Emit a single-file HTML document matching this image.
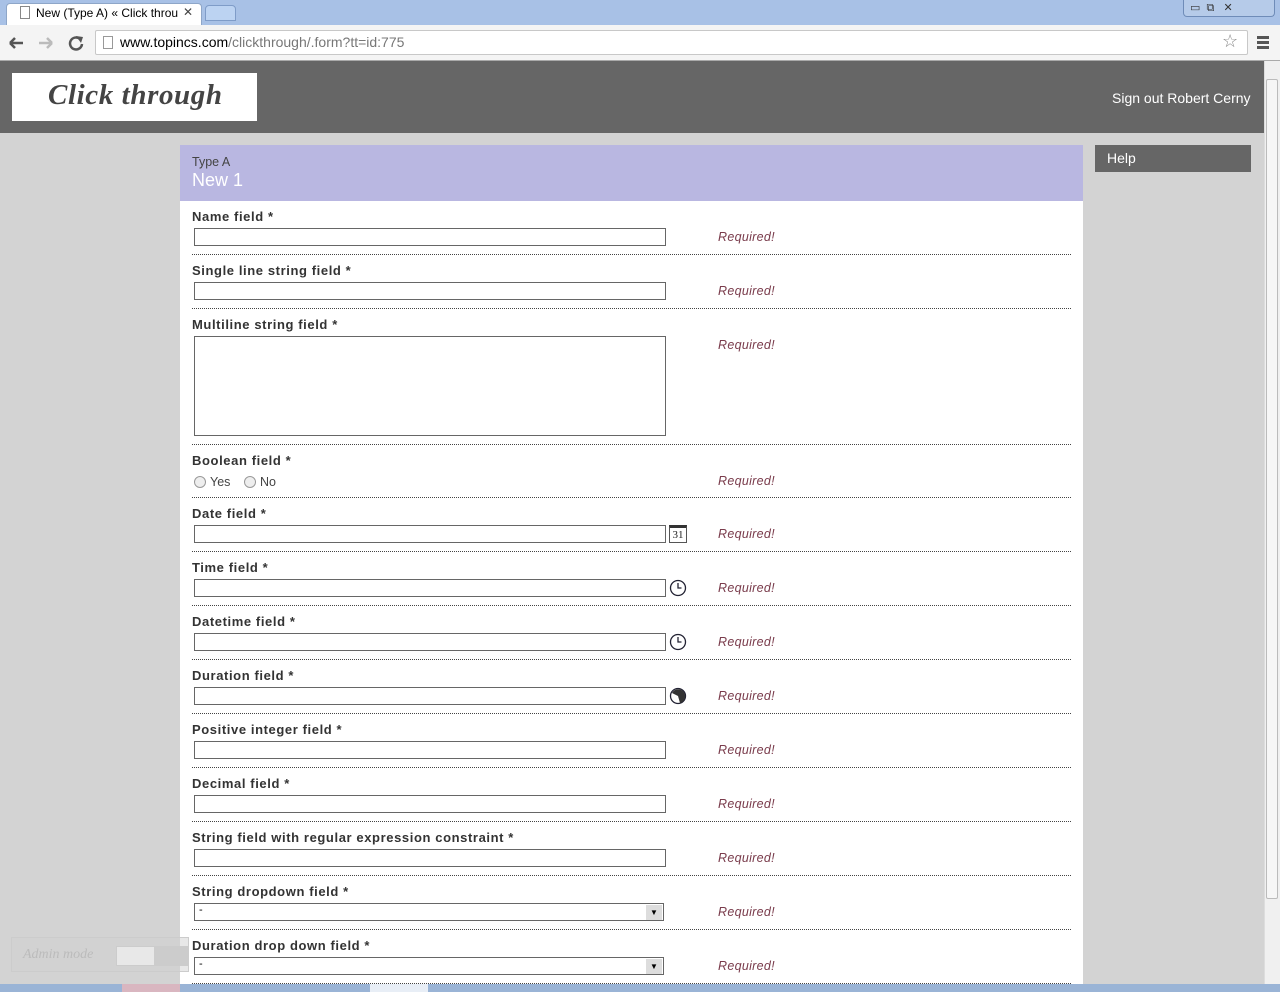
<!DOCTYPE html>
<html><head><meta charset="utf-8"><style>
*{margin:0;padding:0;box-sizing:border-box}
body{width:1280px;height:992px;overflow:hidden;position:relative;background:#d3d3d3;font-family:"Liberation Sans",sans-serif}
.a{position:absolute}
.lbl{position:absolute;left:192px;font-size:13px;font-weight:bold;color:#333;letter-spacing:0.6px}
.inp{position:absolute;left:194px;width:472px;height:18px;border:1px solid #666;background:#fff}
.req{position:absolute;left:718px;font-size:12.5px;font-style:italic;color:#7a3c4c;letter-spacing:0.3px}
.sep{position:absolute;left:192px;width:879px;border-top:1px dotted #444}
</style></head><body>
<!-- tab bar -->
<div class="a" style="left:0;top:0;width:1280px;height:25px;background:#a8c1e6"></div>
<div class="a" style="left:6px;top:3px;width:196px;height:24px;background:#fff;border:1px solid #8ea6c8;border-bottom:none;border-radius:4px 4px 0 0"></div>
<div class="a" style="left:20px;top:6px;width:10px;height:13px;border:1px solid #888;background:#fff"></div>
<div class="a" style="left:36px;top:6px;font-size:12px;color:#000">New (Type A) « Click throu</div>
<div class="a" style="left:180px;top:5px;font-size:12px;color:#444;background:#fff;padding-left:3px">✕</div>
<div class="a" style="left:205px;top:5px;width:31px;height:16px;background:#bcd3f2;border:1px solid #7f9cc8;border-radius:4px 4px 0 0"></div>
<div class="a" style="left:1183px;top:0;width:92px;height:17px;background:#b6cbe9;border:1px solid #6f8cb8;border-top:none;border-radius:0 0 4px 4px"></div>
<div class="a" style="left:1190px;top:1px;font-size:11px;color:#333">▭ &nbsp;⧉ &nbsp;&nbsp;✕</div>
<!-- toolbar -->
<div class="a" style="left:0;top:25px;width:1280px;height:36px;background:#f4f4f4;border-bottom:1px solid #aaa"></div>
<svg class="a" style="left:8px;top:34px" width="80" height="18"><path d="M2 9H15M2 9L7 4M2 9L7 14" stroke="#555" stroke-width="2.5" fill="none"/><path d="M31 9H44M44 9L39 4M44 9L39 14" stroke="#bbb" stroke-width="2.5" fill="none"/><path d="M72 5A6 6 0 1 0 74 10" stroke="#555" stroke-width="2.5" fill="none"/><path d="M68 2L75 3L73 9Z" fill="#555"/></svg>
<div class="a" style="left:95px;top:30px;width:1153px;height:25px;background:#fff;border:1px solid #c8c8c8;border-radius:2px"></div>
<div class="a" style="left:103px;top:36px;width:10px;height:13px;border:1px solid #999"></div>
<div class="a" style="left:120px;top:34px;font-size:14px;color:#000">www.topincs.com<span style="color:#777">/clickthrough/.form?tt=id:775</span></div>
<div class="a" style="left:1222px;top:31px;font-size:18px;color:#888">☆</div>
<div class="a" style="left:1257px;top:36px;width:12px;height:3px;background:#555;box-shadow:0 5px 0 #555,0 10px 0 #555"></div>
<!-- scrollbar -->
<div class="a" style="left:1264px;top:61px;width:16px;height:923px;background:#f0f0f0;border-left:1px solid #ddd"></div>
<div class="a" style="left:1266px;top:79px;width:12px;height:820px;background:#f6f6f6;border:1px solid #bbb;border-radius:2px"></div>
<!-- header -->
<div class="a" style="left:0;top:61px;width:1264px;height:72px;background:#666"></div>
<div class="a" style="left:12px;top:73px;width:245px;height:48px;background:#fff"></div>
<div class="a" style="left:48px;top:79px;font-family:'Liberation Serif',serif;font-size:29px;font-style:italic;font-weight:bold;color:#444;letter-spacing:0.6px">Click through</div>
<div class="a" style="left:1112px;top:90px;font-size:14px;color:#fff">Sign out Robert Cerny</div>
<div class="a" style="left:1095px;top:145px;width:156px;height:27px;background:#666"></div>
<div class="a" style="left:1107px;top:150px;font-size:14px;color:#fff">Help</div>
<!-- content panel -->
<div class="a" style="left:180px;top:145px;width:903px;height:847px;background:#fff"></div>
<div class="a" style="left:180px;top:145px;width:903px;height:56px;background:#b9b7e1"></div>
<div class="a" style="left:192px;top:155px;font-size:12.5px;color:#444">Type A</div>
<div class="a" style="left:192px;top:170px;font-size:18px;color:#fff">New 1</div>

<div class="lbl" style="top:209px">Name field *</div><div class="inp" style="top:228px"></div><div class="req" style="top:230px">Required!</div><div class="sep" style="top:254px"></div>
<div class="lbl" style="top:263px">Single line string field *</div><div class="inp" style="top:282px"></div><div class="req" style="top:284px">Required!</div><div class="sep" style="top:308px"></div>
<div class="lbl" style="top:317px">Multiline string field *</div><div class="inp" style="top:336px;height:100px"></div><div class="req" style="top:338px">Required!</div><div class="sep" style="top:444px"></div>
<div class="lbl" style="top:453px">Boolean field *</div>
<div class="a" style="left:194px;top:476px;width:12px;height:12px;border:1px solid #999;border-radius:50%;background:#eee"></div>
<div class="a" style="left:210px;top:475px;font-size:12.5px;color:#444">Yes</div>
<div class="a" style="left:244px;top:476px;width:12px;height:12px;border:1px solid #999;border-radius:50%;background:#eee"></div>
<div class="a" style="left:260px;top:475px;font-size:12.5px;color:#444">No</div>
<div class="req" style="top:474px">Required!</div><div class="sep" style="top:497px"></div>
<div class="lbl" style="top:506px">Date field *</div><div class="inp" style="top:525px"></div><div class="req" style="top:527px">Required!</div><div class="sep" style="top:551px"></div>
<div class="a" style="left:669px;top:525px;width:18px;height:18px;border:1px solid #555;border-top:3px solid #333;font-family:'Liberation Serif',serif;font-size:11px;text-align:center;line-height:14px;color:#222">31</div>
<div class="lbl" style="top:560px">Time field *</div><div class="inp" style="top:579px"></div><div class="req" style="top:581px">Required!</div><div class="sep" style="top:605px"></div>
<div class="lbl" style="top:614px">Datetime field *</div><div class="inp" style="top:633px"></div><div class="req" style="top:635px">Required!</div><div class="sep" style="top:659px"></div>
<svg class="a" style="left:669px;top:579px" width="18" height="18"><circle cx="9" cy="9" r="7.5" fill="none" stroke="#223" stroke-width="1.3"/><path d="M9 4V9H12.5" fill="none" stroke="#223" stroke-width="1.3"/></svg>
<svg class="a" style="left:669px;top:633px" width="18" height="18"><circle cx="9" cy="9" r="7.5" fill="none" stroke="#223" stroke-width="1.3"/><path d="M9 4V9H12.5" fill="none" stroke="#223" stroke-width="1.3"/></svg>
<div class="lbl" style="top:668px">Duration field *</div><div class="inp" style="top:687px"></div><div class="req" style="top:689px">Required!</div><div class="sep" style="top:713px"></div>
<svg class="a" style="left:669px;top:687px" width="18" height="18"><circle cx="9" cy="9" r="7.5" fill="#fff" stroke="#223" stroke-width="1.3"/><path d="M9 9L3 6A7 7 0 1 1 11 16Z" fill="#333"/></svg>
<div class="lbl" style="top:722px">Positive integer field *</div><div class="inp" style="top:741px"></div><div class="req" style="top:743px">Required!</div><div class="sep" style="top:767px"></div>
<div class="lbl" style="top:776px">Decimal field *</div><div class="inp" style="top:795px"></div><div class="req" style="top:797px">Required!</div><div class="sep" style="top:821px"></div>
<div class="lbl" style="top:830px">String field with regular expression constraint *</div><div class="inp" style="top:849px"></div><div class="req" style="top:851px">Required!</div><div class="sep" style="top:875px"></div>
<div class="lbl" style="top:884px">String dropdown field *</div><div class="inp" style="top:903px;width:470px"></div><div class="a" style="left:199px;top:904px;font-size:11px">-</div>
<div class="a" style="left:646px;top:905px;width:16px;height:15px;background:#ddd;font-size:8px;text-align:center;line-height:15px">▼</div>
<div class="req" style="top:905px">Required!</div><div class="sep" style="top:929px"></div>
<div class="lbl" style="top:938px">Duration drop down field *</div><div class="inp" style="top:957px;width:470px"></div><div class="a" style="left:199px;top:958px;font-size:11px">-</div>
<div class="a" style="left:646px;top:959px;width:16px;height:15px;background:#ddd;font-size:8px;text-align:center;line-height:15px">▼</div>
<div class="req" style="top:959px">Required!</div><div class="sep" style="top:983px"></div>
<!-- admin mode -->
<div class="a" style="left:11px;top:937px;width:178px;height:35px;border:1px solid #ccc;background:rgba(210,210,210,0.5)"></div>
<div class="a" style="left:23px;top:947px;font-family:'Liberation Serif',serif;font-style:italic;font-size:14px;color:#bbb">Admin mode</div>
<div class="a" style="left:116px;top:946px;width:73px;height:20px;border:1px solid #ccc;background:#e8e8e8"></div>
<div class="a" style="left:154px;top:947px;width:35px;height:18px;background:#ccc"></div>
<!-- taskbar -->
<div class="a" style="left:0;top:984px;width:1280px;height:8px;background:#9ab4d6"></div>
<div class="a" style="left:122px;top:984px;width:58px;height:8px;background:#d9b6c0"></div>
<div class="a" style="left:370px;top:984px;width:58px;height:8px;background:#e8eef6"></div>
</body></html>
